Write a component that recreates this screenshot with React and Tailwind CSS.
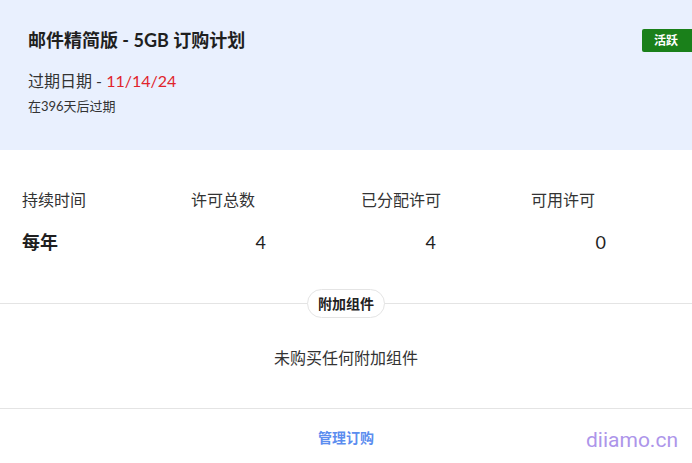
import React from "react";

const stats = [
  { label: "持续时间", value: "每年", bold: true },
  { label: "许可总数", value: "4" },
  { label: "已分配许可", value: "4" },
  { label: "可用许可", value: "0" },
];

export default function App() {
  return (
    <div
      className="relative w-[692px] h-[463px] bg-white text-[#222] overflow-hidden"
      style={{ fontFamily: "Lato, 'Noto Sans CJK SC', sans-serif" }}
    >
      {/* Plan header */}
      <div className="h-[150px] bg-[#e9f0fe] flex justify-between pl-[28px] pt-[28px]">
        <div className="flex flex-col">
          <h1 className="text-[18px] font-bold leading-[24px] text-[#1f1f1f]">邮件精简版 - 5GB 订购计划</h1>
          <p className="mt-[18px] text-[16px] leading-[22px] text-[#333]">
            过期日期 - <span className="text-[#e0232b]">11/14/24</span>
          </p>
          <p className="mt-[5px] text-[13px] leading-[18px] text-[#333]">在396天后过期</p>
        </div>
        <span className="h-[23px] w-[50px] mt-[1px] flex items-center justify-center pr-[2px] bg-[#1a801a] text-white text-[12px] font-bold rounded-l-[2px]">
          活跃
        </span>
      </div>

      {/* Stats */}
      <div className="grid grid-cols-[169px_170px_170px_1fr] pl-[22px] pt-[40px]">
        {stats.map((s) => (
          <div key={s.label} className="flex flex-col">
            <span className="text-[16px] leading-[20px] text-[#333]">{s.label}</span>
            {s.bold ? (
              <span className="mt-[21px] text-[18px] font-bold leading-[22px] text-[#1f1f1f]">{s.value}</span>
            ) : (
              <span className="mt-[21px] w-[75px] text-right text-[18px] leading-[22px] text-[#1f1f1f]">{s.value}</span>
            )}
          </div>
        ))}
      </div>

      {/* Add-ons */}
      <div className="relative mt-[36px] flex justify-center">
        <div className="absolute left-0 right-0 top-[14px] h-px bg-[#e4e4e4]" />
        <span className="relative h-[29px] px-[10px] flex items-center rounded-full border border-[#e4e4e4] bg-white text-[14px] font-bold text-[#222]">
          附加组件
        </span>
      </div>
      <p className="mt-[30px] text-center text-[16px] leading-[20px] text-[#333]">未购买任何附加组件</p>

      {/* Footer */}
      <div className="mt-[40px] h-px bg-[#e4e4e4]" />
      <div className="flex justify-center pt-[20px]">
        <span className="text-[14px] font-bold leading-[18px] text-[#5b8def]">管理订购</span>
      </div>

      <span className="absolute left-[586px] top-[426px] text-[21px] leading-[28px] text-[#ad95ea]" style={{ fontFamily: "Roboto, sans-serif" }}>
        diiamo.cn
      </span>
    </div>
  );
}
